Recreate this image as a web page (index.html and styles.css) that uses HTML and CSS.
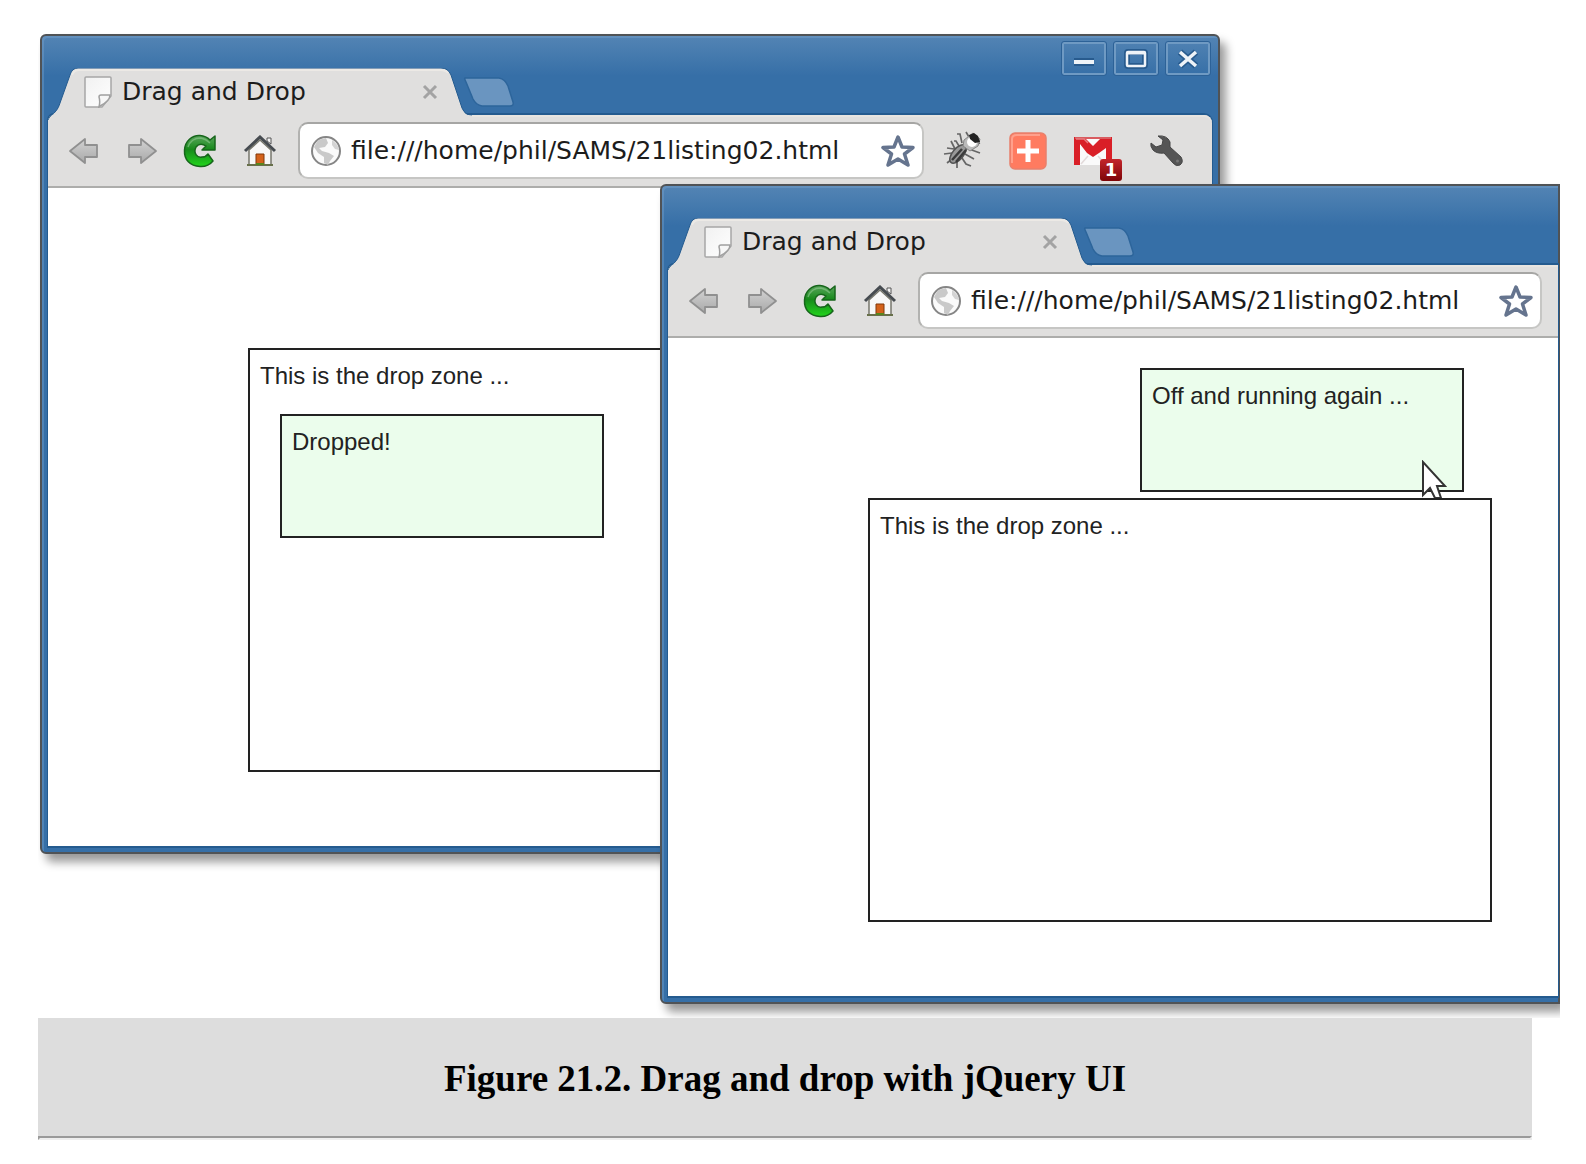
FILE: index.html
```html
<!DOCTYPE html>
<html lang="en">
<head>
<meta charset="utf-8">
<title>Figure 21.2. Drag and drop with jQuery UI</title>
<link rel="stylesheet" href="styles.css">
</head>
<body>
<svg class="defs" aria-hidden="true">
  <defs>
    <linearGradient id="gArrow" x1="0" y1="0" x2="0" y2="1"><stop offset="0" stop-color="#d2d2d2"/><stop offset="1" stop-color="#a9a9a9"/></linearGradient>
    <linearGradient id="gGreen" x1="0" y1="0" x2="0" y2="1"><stop offset="0" stop-color="#5aa55c"/><stop offset=".45" stop-color="#178a1b"/><stop offset="1" stop-color="#22d51c"/></linearGradient>
    <linearGradient id="gPage" x1="0" y1="0" x2="1" y2="1"><stop offset="0" stop-color="#f1f1f1"/><stop offset="1" stop-color="#ffffff"/></linearGradient>
  </defs>
  <symbol id="tab" viewBox="0 0 424 54">
    <path d="M0 54V52C2 47 5 47 7 44C10 41 11 38 12 35L22 7Q24 0 30 0H393Q400 0 403 7L414 40Q417 48 424 48V54Z" fill="#e0dfde"/>
    <path d="M0 52C2 47 5 47 7 44C10 41 11 38 12 35L22 7Q24 0 30 0H393Q400 0 403 7L414 40Q417 47 424 47" fill="none" stroke="#245b8f" stroke-width="1"/>
    <path d="M24 7Q26 2 31 2H392Q398 2 400 5" fill="none" stroke="#ece9e5" stroke-width="2"/>
  </symbol>
  <symbol id="newtab" viewBox="0 0 52 32">
    <path d="M2 2H36Q42 3 45 10L50 26Q51 30 47 30H19Q13 29 10 23L3 6Q1 2 2 2Z" fill="#6a95c0" stroke="#2d659b" stroke-width="1.5"/>
  </symbol>
  <symbol id="page" viewBox="0 0 28 32">
    <path d="M1 2Q1 1 2 1H26Q27 1 27 2V20L18 31H2Q1 31 1 30Z" fill="url(#gPage)" stroke="#a7a7a7" stroke-width="1.5"/>
    <path d="M15 31C16 27 16 24 15 21Q15 19 17 19H26Q26 25 16 30Z" fill="#f7f7f7" stroke="#a0a0a0" stroke-width="1.5"/>
  </symbol>
  <symbol id="back" viewBox="0 0 32 28">
    <path d="M2 14L17 2V8H29V20H17V26Z" fill="url(#gArrow)" stroke="#909090" stroke-width="1.8" stroke-linejoin="round"/>
  </symbol>
  <symbol id="forward" viewBox="0 0 32 28">
    <path d="M30 14L15 2V8H3V20H15V26Z" fill="url(#gArrow)" stroke="#909090" stroke-width="1.8" stroke-linejoin="round"/>
  </symbol>
  <symbol id="reload" viewBox="0 0 34 34">
    <path d="M32 2V16H19L23 12Q17 8 13 13C10 19 14 24 19 23Q23 23 25 20L30 27Q25 33 17 32.500C7 32 1 26 1.500 16C2 7 9 1 17 1.500Q23 2 27 6Z" fill="url(#gGreen)" stroke="#17661b" stroke-width="1.500" stroke-linejoin="round"/>
    <path d="M5 13Q8 4 18 4Q23 5 27 9" fill="none" stroke="#8fc890" stroke-width="1.500" opacity=".6"/>
  </symbol>
  <symbol id="home" viewBox="0 0 34 32">
    <path d="M6 15L17 5L28 15V30H6Z" fill="#f8f8f8" stroke="#77776c" stroke-width="1.5"/>
    <path d="M24 3H28V9L24 6Z" fill="#f4f4f4" stroke="#555" stroke-width="1"/>
    <path d="M2 16L17 2L32 16" fill="none" stroke="#464b50" stroke-width="3"/>
    <path d="M13 19H21V30H13Z" fill="#d4621b" stroke="#81380b"/>
    <path d="M4 30H30" stroke="#68704b" stroke-width="2"/>
    <path d="M13 29H21" stroke="#58851d" stroke-width="2"/>
  </symbol>
  <symbol id="globe" viewBox="0 0 32 32">
    <circle cx="16" cy="16" r="14" fill="#fafafa" stroke="#858585" stroke-width="2"/>
    <path d="M8 5L16 3L18 8L15 12L9 13L12 16L19 18L24 21L20 26L18 30L14 28L14 22L8 18L4 12Z" fill="#c9c9c9"/>
    <path d="M22 5Q28 9 29 15L25 14L22 10Z" fill="#d3d3d3"/>
  </symbol>
  <symbol id="star" viewBox="0 0 34 34">
    <path d="M17 3L21 13L32 13.500L23.500 20L27 31L17 25L7 31L10.500 20L2 13.500L13 13Z" fill="#fff" stroke="#65748e" stroke-width="3.500" stroke-linejoin="round"/>
  </symbol>
  <symbol id="bug" viewBox="0 0 40 40">
    <g fill="none" stroke="#666" stroke-width="1.700">
      <path d="M13 18L9 10M17 15L14 10L12 10M20 12L18 3L15 3M10 22L2 23M10 28L5 32M15 31L15 37M20 27L24 33L29 35M23 23L32 28M27 18L38 22M12 18L5 17M27 6L24 1M35 13L38 12"/>
    </g>
    <ellipse cx="16" cy="23" rx="5.500" ry="11" transform="rotate(40 16 23)" fill="#999" stroke="#555" stroke-width="1.500"/>
    <path d="M10 29L20 18M14 31L24 19" stroke="#3c3c3c" stroke-width="2.500"/>
    <path d="M22 9L31 2L38 8L36 15L28 20L21 15Z" fill="#bbb" stroke="#858585"/>
    <circle cx="30" cy="11" r="5" fill="#fff"/>
    <path d="M27 4L32 2L36 5L38 11L33 12L28 8Z" fill="#222"/>
  </symbol>
  <symbol id="plus" viewBox="0 0 38 38">
    <rect x="1" y="1" width="36" height="36" rx="5" fill="#ff7b60" stroke="#e8806c" stroke-width="1.500"/>
    <path d="M3 31V7Q3 3 8 3H31" fill="none" stroke="#ffa08c" stroke-width="2"/>
    <path d="M19 8V30M8 19H30" stroke="#fff" stroke-width="5"/>
  </symbol>
  <symbol id="mail" viewBox="0 0 38 28">
    <rect width="38" height="28" fill="#fafafa"/>
    <path d="M0 0H10L19 9L28 0H38V28H32V11L25 16L19 20L13 16L6 7V28H0Z" fill="#d91f27"/>
    <path d="M7 27L14 19M31 27L24 19" stroke="#e2dada" stroke-width="1.500"/>
    <path d="M1 1H37" stroke="#d95c60" stroke-width="2"/>
    <path d="M2 2H10L14 6" fill="none" stroke="#e87c80" stroke-width="1.500"/>
  </symbol>
  <symbol id="wrench" viewBox="0 0 34 32">
    <path d="M8 1Q17 0 20 7L20 12L31 22Q34 27 30 30Q26 32 23 28L14 18Q7 19 3 15Q0 11 1 8L6 12L12 10L13 5Z" fill="#555" stroke="#464646"/>
    <circle cx="27.500" cy="26" r="1.500" fill="#777"/>
  </symbol>
  <symbol id="min" viewBox="0 0 24 20"><path d="M2 13H22" stroke="#285b8e" stroke-width="8"/><path d="M2 13H22" stroke="#eef3f8" stroke-width="4"/></symbol>
  <symbol id="max" viewBox="0 0 24 20"><rect x="3" y="3" width="18" height="14" rx="1" fill="none" stroke="#285b8e" stroke-width="6"/><rect x="3" y="3" width="18" height="14" rx="1" fill="none" stroke="#eef3f8" stroke-width="2.500"/><path d="M3 4H21" stroke="#eef3f8" stroke-width="3"/></symbol>
  <symbol id="close" viewBox="0 0 24 20"><path d="M4 3L20 17M20 3L4 17" stroke="#285b8e" stroke-width="6.500"/><path d="M4 3L20 17M20 3L4 17" stroke="#eef3f8" stroke-width="3.500"/></symbol>
  <symbol id="tabclose" viewBox="0 0 16 16"><path d="M2 2L14 14M14 2L2 14" stroke="#a3a3a3" stroke-width="3"/></symbol>
</svg>

<figure class="figure">
  <div class="stage">
    <section class="window window-back">
      <header class="titlebar">
        <div class="tab">
          <svg class="tab-shape"><use href="#tab"/></svg>
          <svg class="tab-icon"><use href="#page"/></svg>
          <span class="tab-title">Drag and Drop</span>
          <button class="tab-close" aria-label="Close tab"><svg><use href="#tabclose"/></svg></button>
        </div>
        <button class="new-tab" aria-label="New tab"><svg><use href="#newtab"/></svg></button>
        <div class="controls">
          <button class="control" aria-label="Minimize"><svg><use href="#min"/></svg></button>
          <button class="control" aria-label="Maximize"><svg><use href="#max"/></svg></button>
          <button class="control" aria-label="Close"><svg><use href="#close"/></svg></button>
        </div>
      </header>
      <div class="toolbar">
        <div class="nav">
          <button class="tool" aria-label="Back"><svg width="32" height="28"><use href="#back"/></svg></button>
          <button class="tool" aria-label="Forward"><svg width="32" height="28"><use href="#forward"/></svg></button>
          <button class="tool" aria-label="Reload"><svg width="34" height="34"><use href="#reload"/></svg></button>
          <button class="tool home" aria-label="Home"><svg width="34" height="32"><use href="#home"/></svg></button>
        </div>
        <div class="omnibox">
          <svg width="32" height="32"><use href="#globe"/></svg>
          <input class="url" type="text" aria-label="Address" value="file:///home/phil/SAMS/21listing02.html">
          <button class="tool star" aria-label="Bookmark"><svg width="34" height="34"><use href="#star"/></svg></button>
        </div>
        <div class="extensions">
          <button class="tool" aria-label="Debug"><svg width="40" height="40"><use href="#bug"/></svg></button>
          <button class="tool" aria-label="Add"><svg width="38" height="38"><use href="#plus"/></svg></button>
          <button class="tool mail" aria-label="Mail"><svg width="38" height="28"><use href="#mail"/></svg><span class="badge">1</span></button>
          <button class="tool settings" aria-label="Settings"><svg width="34" height="32"><use href="#wrench"/></svg></button>
        </div>
      </div>
      <div class="page page-dropped">
        <div class="dropzone">This is the drop zone ...
          <div class="draggable">Dropped!</div>
        </div>
      </div>
    </section>

    <section class="window window-front">
      <header class="titlebar">
        <div class="tab">
          <svg class="tab-shape"><use href="#tab"/></svg>
          <svg class="tab-icon"><use href="#page"/></svg>
          <span class="tab-title">Drag and Drop</span>
          <button class="tab-close" aria-label="Close tab"><svg><use href="#tabclose"/></svg></button>
        </div>
        <button class="new-tab" aria-label="New tab"><svg><use href="#newtab"/></svg></button>
      </header>
      <div class="toolbar">
        <div class="nav">
          <button class="tool" aria-label="Back"><svg width="32" height="28"><use href="#back"/></svg></button>
          <button class="tool" aria-label="Forward"><svg width="32" height="28"><use href="#forward"/></svg></button>
          <button class="tool" aria-label="Reload"><svg width="34" height="34"><use href="#reload"/></svg></button>
          <button class="tool home" aria-label="Home"><svg width="34" height="32"><use href="#home"/></svg></button>
        </div>
        <div class="omnibox">
          <svg width="32" height="32"><use href="#globe"/></svg>
          <input class="url" type="text" aria-label="Address" value="file:///home/phil/SAMS/21listing02.html">
          <button class="tool star" aria-label="Bookmark"><svg width="34" height="34"><use href="#star"/></svg></button>
        </div>
      </div>
      <div class="page page-dragging">
        <div class="draggable">Off and running again ...
          <svg class="cursor" viewBox="0 0 26 38"><path d="M2 2V35L9 28L14 38H20L16 26H24Z" fill="#fff" stroke="#333" stroke-width="2"/></svg>
        </div>
        <div class="dropzone">This is the drop zone ...</div>
      </div>
    </section>
  </div>
  <figcaption class="caption">Figure 21.2. Drag and drop with jQuery UI</figcaption>
</figure>
<hr class="rule">
</body>
</html>
```
FILE: styles.css
```css
* { box-sizing: border-box; }

body {
  margin: 0;
  padding: 0 54px 0 38px;
  background: #fff;
  color: #000;
}

button {
  padding: 0;
  border: 0;
  background: none;
  font: inherit;
}

svg { display: block; flex: none; }

.defs { position: absolute; width: 0; height: 0; }

.figure { margin: 0; }

/* Desktop area holding the two overlapping windows */
.stage {
  position: relative;
  margin-right: -28px;
  padding: 184px 0 14px 622px;
  overflow: hidden;
}

.window {
  padding: 0 6px 6px;
  border: 2px solid #505356;
  border-radius: 6px;
  background: linear-gradient(#5384b4, #366fa7 40px) #366fa7;
  box-shadow: 6px 8px 10px rgba(0, 0, 0, .4), inset 2px 2px 0 rgba(130, 170, 210, .35);
}

.window-back {
  position: absolute;
  top: 34px;
  left: 2px;
  right: 340px;
}

.window-front {
  position: relative;
  padding-right: 0;
  border-radius: 6px 0 0 6px;
}

.titlebar {
  position: relative;
  z-index: 1;
  display: flex;
  align-items: flex-end;
  height: 79px;
}

.tab {
  position: relative;
  display: flex;
  align-items: center;
  flex: none;
  width: 424px;
  height: 47px;
  padding: 0 34px 0 36px;
}

.tab-shape {
  position: absolute;
  top: 0;
  left: 0;
  width: 424px;
  height: 54px;
}

.tab-icon { position: relative; width: 28px; height: 32px; }

.tab-title {
  position: relative;
  flex: 1;
  margin-left: 10px;
  font: 25px/32px "DejaVu Sans", sans-serif;
  color: #1c1c1c;
}

.tab-close { position: relative; }
.tab-close svg { width: 16px; height: 16px; }

.new-tab { margin: 0 0 7px -9px; position: relative; }
.new-tab svg { width: 52px; height: 32px; }

.controls {
  display: flex;
  gap: 6px;
  align-self: flex-start;
  margin: 5px 1px 0 auto;
}

.control {
  display: flex;
  align-items: center;
  justify-content: center;
  width: 46px;
  height: 35px;
  border: 1px solid #2d6297;
  border-radius: 3px;
  box-shadow: inset 0 0 0 2px #6f9ac3;
}

.control svg { width: 24px; height: 20px; }

.toolbar {
  display: flex;
  align-items: center;
  height: 73px;
  padding: 0 27px 0 18px;
  border-bottom: 2px solid #adadab;
  border-radius: 6px 8px 0 0;
  background: #e0dfde;
  box-shadow: 0 -1px 0 1px #245b8f, inset 0 2px 0 #e8e5e1;
}

.window-front .toolbar { border-radius: 6px 0 0 0; padding-right: 16px; }

.nav { display: flex; gap: 22px; margin-right: 20px; }

.tool { display: flex; align-items: center; justify-content: center; min-width: 36px; }

.home { margin-left: 2px; }

.omnibox {
  display: flex;
  align-items: center;
  flex: 1;
  min-width: 0;
  height: 57px;
  padding: 0 6px 0 10px;
  border: 2px solid #c6c6c4;
  border-top-color: #a6a6a4;
  border-left-color: #b2b2b0;
  border-radius: 10px;
  background: #fff;
}

.url {
  flex: 1;
  min-width: 0;
  height: 40px;
  margin-left: 9px;
  padding: 0;
  border: 0;
  outline: 0;
  background: none;
  font: 25px "DejaVu Sans", sans-serif;
  color: #1c1c1c;
}

.extensions { display: flex; align-items: center; gap: 27px; margin-left: 18px; }

.settings { margin-left: 10px; }

.mail { position: relative; }

.badge {
  position: absolute;
  left: 26px;
  top: 22px;
  width: 22px;
  height: 22px;
  border-radius: 3px;
  background: linear-gradient(#c4262b, #7d0508);
  color: #fff;
  font: bold 18px/22px "DejaVu Sans", sans-serif;
  text-align: center;
}

.page {
  padding-bottom: 74px;
  background: #fff;
  box-shadow: 0 1px 0 1px #245b8f;
  font: 24px/32px "Liberation Sans", Arial, sans-serif;
  color: #222;
}

.page-dropped { padding-top: 160px; }
.page-dragging { padding-top: 30px; }

.dropzone {
  width: 624px;
  height: 424px;
  margin-left: 200px;
  padding: 10px;
  border: 2px solid #222;
}

.draggable {
  position: relative;
  width: 324px;
  height: 124px;
  padding: 10px;
  border: 2px solid #222;
  background: #ebfdec;
}

.dropzone .draggable { margin: 22px 0 0 20px; }
.page-dragging .draggable { margin: 0 0 6px 472px; }
.page-dragging .dropzone { position: relative; background: #fff; }

.cursor {
  position: absolute;
  left: 279px;
  top: 90px;
  width: 26px;
  height: 38px;
}

.caption {
  padding: 42px 20px 38px;
  background: #ddd;
  font: bold 37px/38px Georgia, "Liberation Serif", serif;
  text-align: center;
}

.rule {
  height: 4px;
  margin: 0;
  border: 2px solid;
  border-color: #9a9a9a #eee #eee #9a9a9a;
}
```
